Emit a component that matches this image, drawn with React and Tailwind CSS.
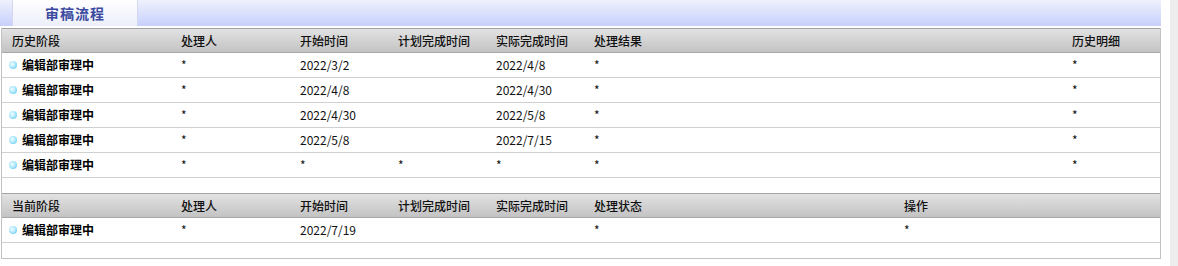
const historyRows = [
  { stage: '编辑部审理中', handler: '*', start: '2022/3/2', plan: '', done: '2022/4/8', result: '*', detail: '*' },
  { stage: '编辑部审理中', handler: '*', start: '2022/4/8', plan: '', done: '2022/4/30', result: '*', detail: '*' },
  { stage: '编辑部审理中', handler: '*', start: '2022/4/30', plan: '', done: '2022/5/8', result: '*', detail: '*' },
  { stage: '编辑部审理中', handler: '*', start: '2022/5/8', plan: '', done: '2022/7/15', result: '*', detail: '*' },
  { stage: '编辑部审理中', handler: '*', start: '*', plan: '*', done: '*', result: '*', detail: '*' },
];

const currentRows = [
  { stage: '编辑部审理中', handler: '*', start: '2022/7/19', plan: '', done: '', status: '*', action: '*' },
];

const Dot = () => (
  <span className="w-[8px] h-[8px] rounded-full shrink-0 bg-[radial-gradient(circle_at_40%_40%,#f4fdff_0%,#b0e9fc_45%,#48bde9_100%)]" />
);

// shared column widths for both sections; the 6th column differs
const Cell = ({ className = '', children }) => (
  <div className={`pl-[5px] flex items-center whitespace-nowrap ${className}`}>{children}</div>
);

const HeaderRow = ({ cols, sixthWidth }) => (
  <div className="flex h-[25px] border-t border-b border-t-[#a3a3a3] border-b-[#a9a9a9] bg-gradient-to-b from-[#e2e2e2] to-[#c3c3c3] text-[12px] font-medium text-[#111]">
    <div className="w-[174px] pl-[10px] flex items-center">{cols[0]}</div>
    <Cell className="w-[119px]">{cols[1]}</Cell>
    <Cell className="w-[98px]">{cols[2]}</Cell>
    <Cell className="w-[98px]">{cols[3]}</Cell>
    <Cell className="w-[98px]">{cols[4]}</Cell>
    <Cell className={sixthWidth}>{cols[5]}</Cell>
    <Cell className="flex-1">{cols[6]}</Cell>
  </div>
);

const DataRow = ({ values, sixthWidth }) => (
  <div className="flex h-[25px] border-b border-[#d0d0d0] text-[12px] text-[#111]">
    <div className="w-[174px] pl-[7px] flex items-center gap-[5px] font-bold text-black">
      <Dot />
      {values[0]}
    </div>
    <Cell className="w-[119px]">{values[1]}</Cell>
    <Cell className="w-[98px]">{values[2]}</Cell>
    <Cell className="w-[98px]">{values[3]}</Cell>
    <Cell className="w-[98px]">{values[4]}</Cell>
    <Cell className={sixthWidth}>{values[5]}</Cell>
    <Cell className="flex-1">{values[6]}</Cell>
  </div>
);

export default function App() {
  return (
    <div className="flex w-[1178px] h-[266px] bg-white font-['Microsoft_YaHei','Noto_Sans_CJK_SC',sans-serif] overflow-hidden">
      <div className="w-[1161px] flex flex-col">
        {/* tab strip */}
        <div className="h-[26px] bg-gradient-to-b from-[#eff1fc] to-[#c7d0fc] pl-[12px] flex">
          <div className="w-[126px] h-full bg-gradient-to-b from-white to-[#eceefa] border-l border-r border-[#d3d7ef] flex items-center justify-center">
            <span className="text-[14px] font-bold tracking-[1px] text-[#3b4a9f] leading-none">审稿流程</span>
          </div>
        </div>

        <div className="mt-[2px] ml-[1px] border-l border-r border-b border-[#c2c2c2]">
          <HeaderRow
            cols={['历史阶段', '处理人', '开始时间', '计划完成时间', '实际完成时间', '处理结果', '历史明细']}
            sixthWidth="w-[478px]"
          />
          {historyRows.map((r, i) => (
            <DataRow
              key={i}
              values={[r.stage, r.handler, r.start, r.plan, r.done, r.result, r.detail]}
              sixthWidth="w-[478px]"
            />
          ))}
          <div className="h-[15px]" />

          <HeaderRow
            cols={['当前阶段', '处理人', '开始时间', '计划完成时间', '实际完成时间', '处理状态', '操作']}
            sixthWidth="w-[310px]"
          />
          {currentRows.map((r, i) => (
            <DataRow
              key={i}
              values={[r.stage, r.handler, r.start, r.plan, r.done, r.status, r.action]}
              sixthWidth="w-[310px]"
            />
          ))}
          <div className="h-[15px]" />
        </div>
      </div>
      <div className="flex-1" />
      <div className="w-[8px] h-full bg-[#ededed]" />
    </div>
  );
}
